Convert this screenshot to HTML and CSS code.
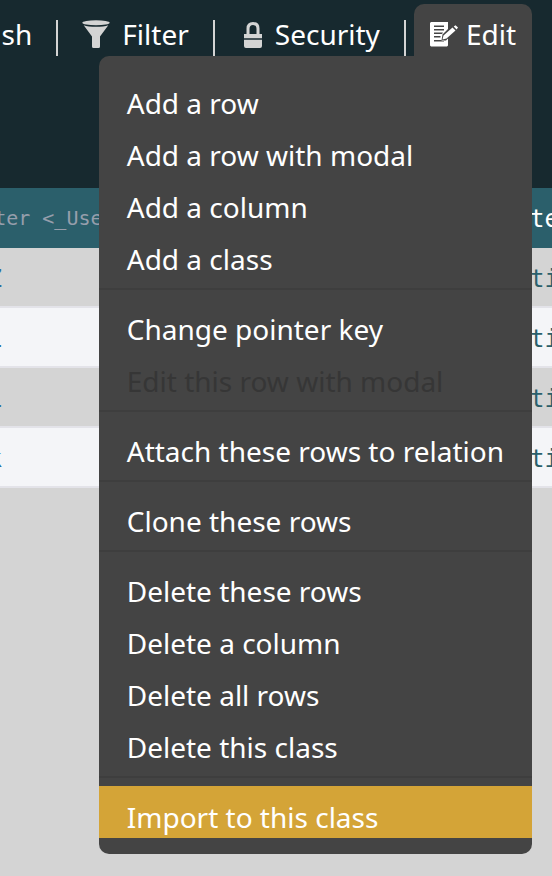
FILE: index.html
```
<!DOCTYPE html>
<html lang="en">
<head>
<meta charset="utf-8">
<title>Data browser</title>
<link rel="stylesheet" href="styles.css">
</head>
<body>
<header class="toolbar">
  <button class="tool" type="button">sh</button>
  <button class="tool" type="button">
    <svg class="icon" viewBox="0 0 28 28" aria-hidden="true"><ellipse cx="14" cy="2.7" rx="13.7" ry="2.5"/><path d="M1.7 5.2C7 7.4 21 7.4 26.3 5.2L18 16.5V26.5Q18 28 16.5 28H11.500Q10 28 10 26.500V16.500Z"/></svg>
    Filter
  </button>
  <button class="tool" type="button">
    <svg class="icon icon-lock" viewBox="0 0 24 28" aria-hidden="true"><path d="M7.500 14V8.500Q7.500 2 14 2Q20.500 2 20.500 8.500V14H17.500V9Q17.500 5 14 5Q10.500 5 10.500 9V14Z"/><path d="M5 14H23V18.300H5ZM5 19.700H23V26Q23 28 21 28H7Q5 28 5 26Z"/></svg>
    Security
  </button>
  <div class="menu-anchor">
    <button class="tool tool-open" type="button" aria-expanded="true">
      <svg class="icon" viewBox="0 0 28 28" aria-hidden="true"><path fill-rule="evenodd" d="M1 2H18V9L12.500 14.500L11.500 20.500H16L18 18.500V25.500L17 26.500H1L0 25.500V3ZM4 5.500V7H14V5.500ZM4 9V10.500H14V9ZM4 12.500V14H12L13 12.500ZM4 16V17.500H10.500V16ZM4 20V21.500H14V20Z"/><path d="M12.500 19.500L13.500 15.500L22.500 7.500L25.500 10.500L16.500 18.500ZM23.700 6.500L25.500 5.200L28 7.500L26.600 9.500Z"/></svg>
      Edit
    </button>
    <div class="menu">
      <button type="button">Add a row</button>
      <button type="button">Add a row with modal</button>
      <button type="button">Add a column</button>
      <button type="button">Add a class</button>
      <hr>
      <button type="button">Change pointer key</button>
      <button type="button" disabled>Edit this row with modal</button>
      <hr>
      <button type="button">Attach these rows to relation</button>
      <hr>
      <button type="button">Clone these rows</button>
      <hr>
      <button type="button">Delete these rows</button>
      <button type="button">Delete a column</button>
      <button type="button">Delete all rows</button>
      <button type="button">Delete this class</button>
      <hr>
      <button class="highlighted" type="button">Import to this class</button>
    </div>
  </div>
</header>
<main class="browser">
  <table>
    <thead><tr><th class="type">Pointer &lt;_User&gt;</th><th class="name">te</th></tr></thead>
    <tbody>
      <tr><td><a href="#">Z</a></td><td class="value">ti</td></tr>
      <tr><td><a href="#">L</a></td><td class="value">ti</td></tr>
      <tr><td><a href="#">L</a></td><td class="value">ti</td></tr>
      <tr><td><a href="#">k</a></td><td class="value">ti</td></tr>
    </tbody>
  </table>
</main>
</body>
</html>
```
FILE: styles.css
```
* { box-sizing: border-box; }
body {
  margin: 0;
  min-height: 100vh;
  overflow: hidden;
  background: #d4d4d4;
  color: #fff;
  font: 28px/38px "Noto Sans", sans-serif;
}
button {
  border: 0;
  background: none;
  color: inherit;
  font: inherit;
  white-space: nowrap;
}
.toolbar {
  display: flex;
  justify-content: flex-end;
  align-items: flex-start;
  height: 188px;
  padding: 20px 20px 0;
  background: #17292f;
}
.tool {
  display: flex;
  flex: none;
  align-items: flex-start;
  gap: 12px;
  height: 36px;
  margin: 0;
  padding: 0 24px;
  border-right: 2px solid #d4d4d4;
  line-height: 28px;
}
.toolbar > .tool:first-child { padding-left: 0; }
.icon {
  flex: none;
  width: 28px;
  height: 28px;
  fill: #d4d4d4;
}
.icon-lock { width: 24px; }
.menu-anchor {
  position: relative;
  flex: none;
  margin: -16px 0 0 8px;
}
.tool-open {
  gap: 8px;
  height: 52px;
  padding: 16px 16px 0;
  border: 0;
  border-radius: 10px 10px 0 0;
  background: #444;
}
.tool-open .icon { fill: #fff; }
.menu {
  position: absolute;
  top: 100%;
  right: 0;
  z-index: 1;
  padding: 16px 0;
  border-radius: 10px 0 10px 10px;
  background: #444;
}
.menu button {
  display: block;
  width: 100%;
  padding: 12px 28px 2px;
  text-align: left;
}
.menu button:disabled { color: #363636; }
.menu .highlighted { background: #d4a437; }
.menu hr {
  height: 2px;
  margin: 8px 0;
  border: 0;
  background: #3e3e3e;
}
.browser { overflow: hidden; }
table {
  width: calc(100% + 64px);
  margin-left: -64px;
  border-spacing: 0;
  table-layout: fixed;
  font-family: "DejaVu Sans Mono", monospace;
  font-size: 24px;
}
th, td {
  height: 60px;
  padding: 0;
  overflow: hidden;
  text-align: left;
  white-space: nowrap;
  font-weight: 400;
}
th { background: #2b5f6b; }
td {
  padding-top: 4px;
  border-bottom: 2px solid #e3e3e9;
}
tbody tr:nth-child(even) { background: #f4f5f8; }
.type {
  padding-left: 10px;
  color: #969eab;
  font-size: 20px;
}
td a {
  display: block;
  width: 66px;
  color: #2a6c9e;
  text-align: right;
  text-decoration: none;
}
.name, .value {
  width: 22px;
}
.name { padding-top: 2px; }
.value { color: #2b5f6b; }
```
